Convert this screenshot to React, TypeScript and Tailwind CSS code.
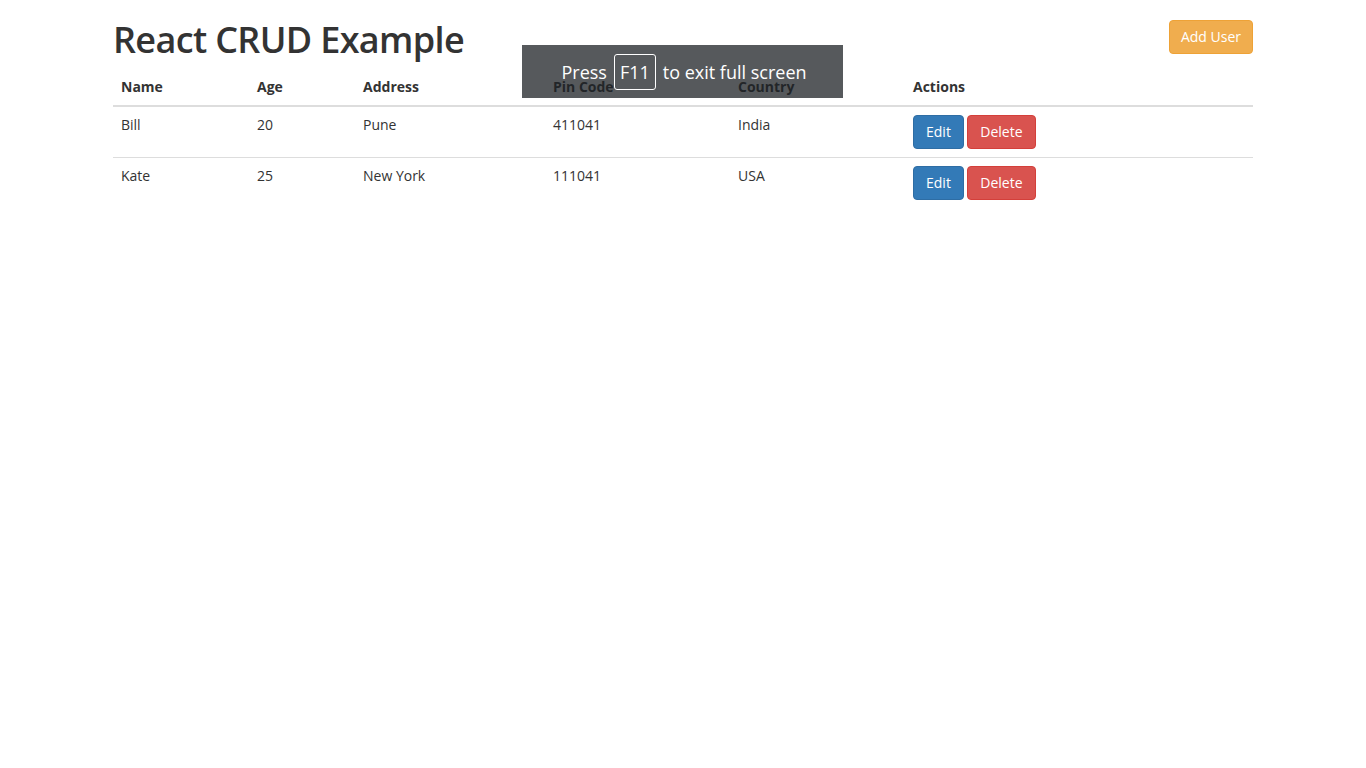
import React from "react";

const users = [
  { name: "Bill", age: 20, address: "Pune", pin: "411041", country: "India" },
  { name: "Kate", age: 25, address: "New York", pin: "111041", country: "USA" },
];

export default function App() {
  return (
    <div
      className="relative min-h-[768px] bg-white text-[#333] text-[14px] leading-[20px]"
      style={{ fontFamily: '"Open Sans", "Liberation Sans", sans-serif' }}
    >
      <div className="mx-auto w-[1170px] px-[15px]">
        <div className="flex items-start justify-between">
          <h1 className="mt-[20px] mb-[9px] text-[36px] leading-[39.6px] font-semibold tracking-[-0.65px]">
            React CRUD Example
          </h1>
          <button className="mt-[20px] h-[34px] w-[84px] rounded-[4px] border border-[#eea236] bg-[#f0ad4e] text-[14px] text-white">
            Add User
          </button>
        </div>
        <table className="w-full border-collapse">
          <thead>
            <tr className="border-b-2 border-[#ddd] text-left">
              <th className="w-[136px] p-[8px] font-bold">Name</th>
              <th className="w-[106px] p-[8px] font-bold">Age</th>
              <th className="w-[190px] p-[8px] font-bold">Address</th>
              <th className="w-[185px] p-[8px] font-bold">Pin Code</th>
              <th className="w-[175px] p-[8px] font-bold">Country</th>
              <th className="p-[8px] font-bold">Actions</th>
            </tr>
          </thead>
          <tbody>
            {users.map((u) => (
              <tr key={u.name} className="border-t border-[#ddd]">
                <td className="p-[8px] align-top">{u.name}</td>
                <td className="p-[8px] align-top">{u.age}</td>
                <td className="p-[8px] align-top">{u.address}</td>
                <td className="p-[8px] align-top">{u.pin}</td>
                <td className="p-[8px] align-top">{u.country}</td>
                <td className="p-[8px] align-top">
                  <div className="flex gap-[3px]">
                    <button className="h-[34px] rounded-[4px] border border-[#2e6da4] bg-[#337ab7] px-[12px] text-white">
                      Edit
                    </button>
                    <button className="h-[34px] w-[69px] rounded-[4px] border border-[#d43f3a] bg-[#d9534f] text-white">
                      Delete
                    </button>
                  </div>
                </td>
              </tr>
            ))}
          </tbody>
        </table>
      </div>
      <div className="absolute left-[522px] top-[45px] flex h-[53px] w-[321px] items-center justify-center gap-[7px] pl-[3px] bg-[rgba(30,33,38,0.75)] text-[18px] text-white">
        <span>Press</span>
        <span className="rounded-[3px] border border-white px-[5px] leading-[34px]">F11</span>
        <span>to exit full screen</span>
      </div>
    </div>
  );
}
